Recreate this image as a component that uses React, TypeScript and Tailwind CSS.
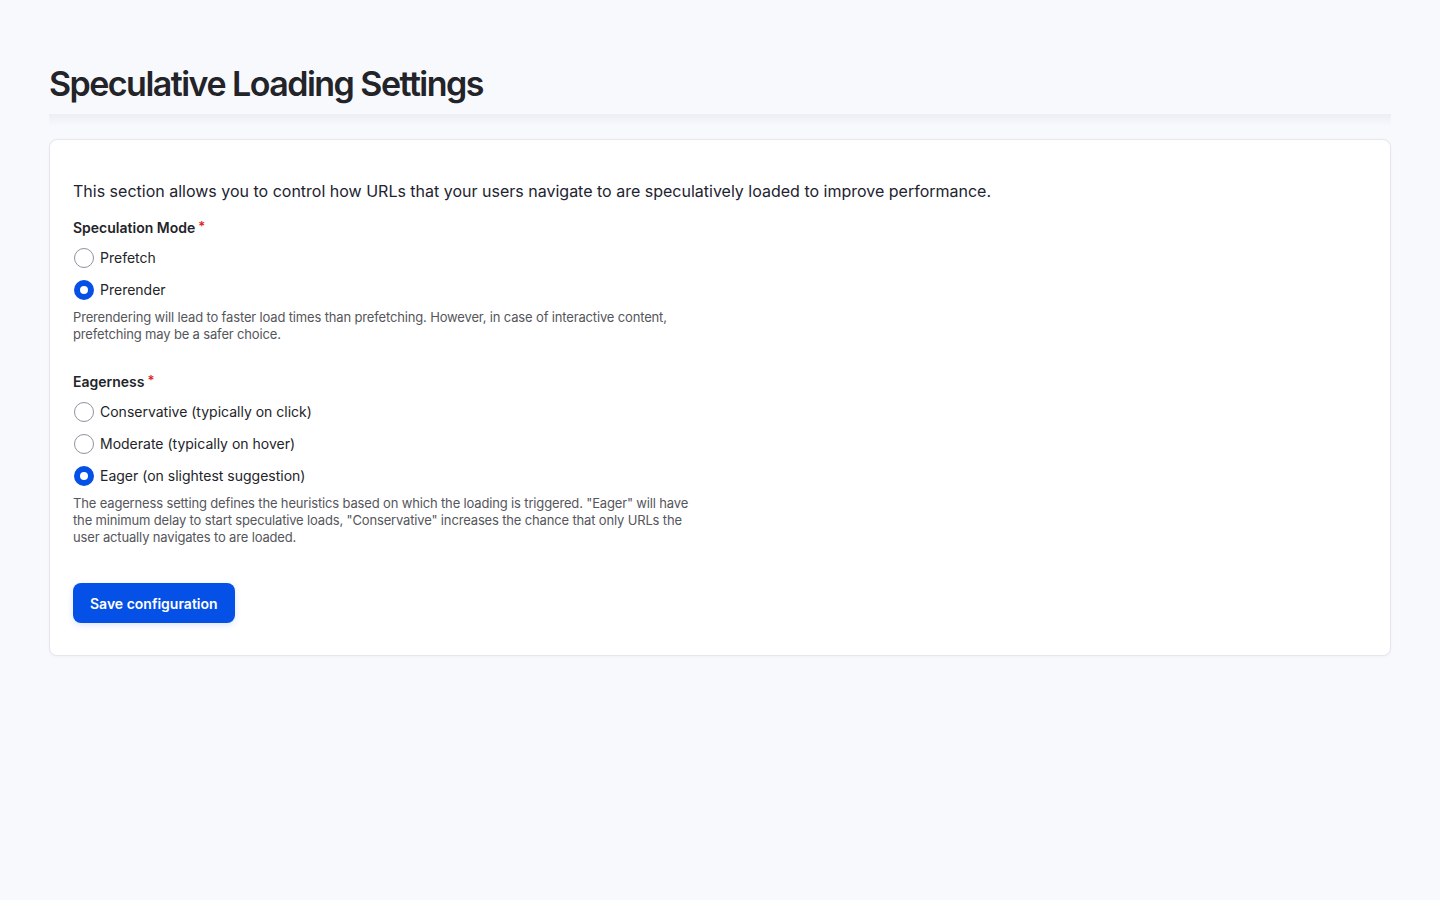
import { useState } from "react";

function Radio({
  label,
  checked,
  onSelect,
}: {
  label: string;
  checked: boolean;
  onSelect: () => void;
}) {
  return (
    <label
      className="flex h-[32px] cursor-pointer items-center gap-[6px]"
      onClick={onSelect}
    >
      <span
        className={
          checked
            ? "ml-[1px] box-border h-[20px] w-[20px] shrink-0 rounded-full border-[6px] border-[#0550e6] bg-white"
            : "ml-[1px] box-border h-[20px] w-[20px] shrink-0 rounded-full border border-[#8e929c] bg-white"
        }
      />
      <span className="text-[14px] leading-[18px] text-[#232429]">{label}</span>
    </label>
  );
}

function FieldLabel({ children }: { children: string }) {
  return (
    <div className="flex items-start text-[14px] font-semibold leading-[18px] text-[#232429]">
      {children}
      <span className="ml-[3px] -mt-[2px] text-[13px] text-[#dc2323]">*</span>
    </div>
  );
}

export default function App() {
  const [mode, setMode] = useState("prerender");
  const [eagerness, setEagerness] = useState("eager");

  return (
    <div
      className="min-h-screen bg-[#f8f9fd] px-[49px] pb-12 text-[#232429]"
      style={{ fontFamily: "Inter, 'Noto Sans', sans-serif" }}
    >
      <header className="relative pt-[63px] pb-[10px]">
        <h1 className="text-[34px] font-semibold leading-[41px] tracking-[-0.045em] text-[#232429]">
          Speculative Loading Settings
        </h1>
        <div className="pointer-events-none absolute -bottom-[12px] left-0 right-0 h-[12px] bg-gradient-to-b from-[#eceef4] to-transparent" />
      </header>

      <main className="mt-[25px] rounded-[8px] border border-[#e6e7ee] bg-white px-[23px] pt-[39px] pb-[32px] shadow-[0_1px_3px_rgba(0,0,0,0.04)]">
        <p className="text-[16px] leading-[24px] text-[#222330]">
          This section allows you to control how URLs that your users navigate to are speculatively
          loaded to improve performance.
        </p>

        <section className="mt-[16px]">
          <FieldLabel>Speculation Mode</FieldLabel>
          <div className="mt-[5px] flex flex-col">
            <Radio label="Prefetch" checked={mode === "prefetch"} onSelect={() => setMode("prefetch")} />
            <Radio label="Prerender" checked={mode === "prerender"} onSelect={() => setMode("prerender")} />
          </div>
          <p className="mt-[3px] max-w-[625px] text-[13px] leading-[17px] tracking-[-0.012em] text-[#55565b]">
            Prerendering will lead to faster load times than prefetching. However, in case of
            interactive content, prefetching may be a safer choice.
          </p>
        </section>

        <section className="mt-[30px]">
          <FieldLabel>Eagerness</FieldLabel>
          <div className="mt-[5px] flex flex-col">
            <Radio
              label="Conservative (typically on click)"
              checked={eagerness === "conservative"}
              onSelect={() => setEagerness("conservative")}
            />
            <Radio
              label="Moderate (typically on hover)"
              checked={eagerness === "moderate"}
              onSelect={() => setEagerness("moderate")}
            />
            <Radio
              label="Eager (on slightest suggestion)"
              checked={eagerness === "eager"}
              onSelect={() => setEagerness("eager")}
            />
          </div>
          <p className="mt-[3px] max-w-[625px] text-[13px] leading-[17px] tracking-[-0.012em] text-[#55565b]">
            The eagerness setting defines the heuristics based on which the loading is triggered.
            "Eager" will have the minimum delay to start speculative loads, "Conservative" increases
            the chance that only URLs the user actually navigates to are loaded.
          </p>
        </section>

        <button className="mt-[37px] h-[40px] rounded-[8px] bg-[#0550e6] px-[17px] text-[14px] font-semibold text-white shadow-[0_2px_6px_rgba(5,80,230,0.15)]">
          Save configuration
        </button>
      </main>
    </div>
  );
}
